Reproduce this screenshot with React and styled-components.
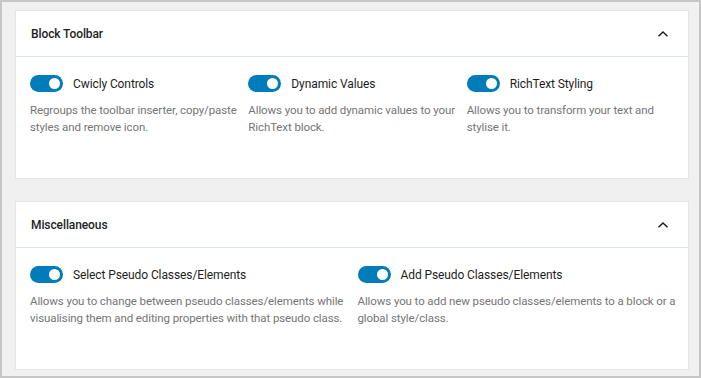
import React from "react";
import styled, { createGlobalStyle } from "styled-components";

const GlobalStyle = createGlobalStyle`
  html, body {
    margin: 0;
    padding: 0;
  }
  body {
    font-family: Roboto, "Noto Sans", sans-serif;
  }
`;

const sections = [
  {
    title: "Block Toolbar",
    items: [
      {
        label: "Cwicly Controls",
        text: "Regroups the toolbar inserter, copy/paste styles and remove icon.",
      },
      {
        label: "Dynamic Values",
        text: "Allows you to add dynamic values to your RichText block.",
      },
      {
        label: "RichText Styling",
        text: "Allows you to transform your text and stylise it.",
      },
    ],
  },
  {
    title: "Miscellaneous",
    items: [
      {
        label: "Select Pseudo Classes/Elements",
        text: "Allows you to change between pseudo classes/elements while visualising them and editing properties with that pseudo class.",
      },
      {
        label: "Add Pseudo Classes/Elements",
        text: "Allows you to add new pseudo classes/elements to a block or a global style/class.",
      },
    ],
  },
];

function App() {
  return (
    <>
      <GlobalStyle />
      <Frame>
        {sections.map((section) => (
          <Panel key={section.title}>
            <PanelHeader>
              <PanelTitle>{section.title}</PanelTitle>
              <svg width="12" height="8" viewBox="0 0 12 8">
                <path
                  d="M1.5 6.2 L6 2 L10.5 6.2"
                  fill="none"
                  stroke="#1e1e1e"
                  strokeWidth="1.5"
                />
              </svg>
            </PanelHeader>
            <PanelBody $cols={section.items.length}>
              {section.items.map((item) => (
                <Setting key={item.label}>
                  <SettingRow>
                    <Toggle $on />
                    <Label>{item.label}</Label>
                  </SettingRow>
                  <Help>{item.text}</Help>
                </Setting>
              ))}
            </PanelBody>
          </Panel>
        ))}
      </Frame>
    </>
  );
}

const Frame = styled.div`
  box-sizing: border-box;
  width: 701px;
  height: 378px;
  overflow: hidden;
  border: 2px solid #c6c6c6;
  background: #f0f0f0;
  padding: 8px 10px 0 13px;
  display: flex;
  flex-direction: column;
  gap: 22px;
`;

const Panel = styled.section`
  background: #fff;
  border: 1px solid #e2e4e7;
`;

const PanelHeader = styled.div`
  height: 45px;
  display: flex;
  align-items: center;
  justify-content: space-between;
  padding: 0 19px 0 15px;
  border-bottom: 1px solid #dde5f0;
`;

const PanelTitle = styled.h2`
  margin: 0;
  font-size: 12px;
  font-weight: 500;
  letter-spacing: -0.1px;
  color: #1e1e1e;
`;

const PanelBody = styled.div`
  display: grid;
  grid-template-columns: repeat(${({ $cols }) => $cols}, 1fr);
  padding: 18px 3px 42px 14px;
`;

const Setting = styled.div`
  padding-right: 2px;
`;

const SettingRow = styled.div`
  display: flex;
  align-items: center;
  gap: 10px;
  height: 17px;
  margin-bottom: 10px;
`;

const Toggle = styled.span`
  position: relative;
  flex: none;
  width: 33px;
  height: 17px;
  border-radius: 9px;
  background: ${({ $on }) => ($on ? "#007cba" : "#ccc")};

  &::after {
    content: "";
    position: absolute;
    top: 3px;
    left: ${({ $on }) => ($on ? "19px" : "3px")};
    width: 11px;
    height: 11px;
    border-radius: 50%;
    background: #fff;
  }
`;

const Label = styled.span`
  font-size: 12px;
  letter-spacing: -0.1px;
  color: #1e1e1e;
`;

const Help = styled.p`
  margin: 0;
  font-size: 11.5px;
  letter-spacing: -0.1px;
  line-height: 17px;
  color: #757575;
`;

export default App;
